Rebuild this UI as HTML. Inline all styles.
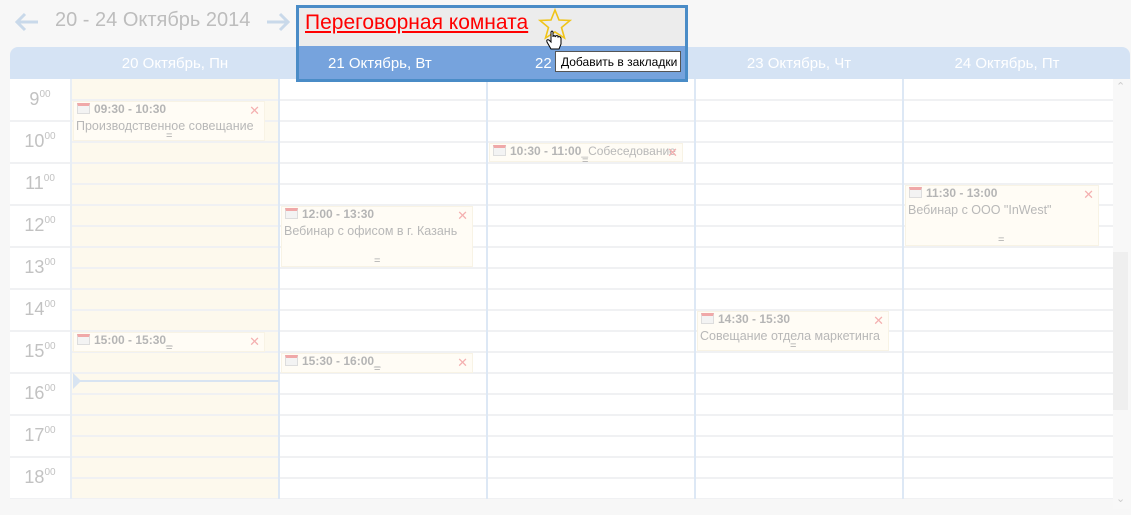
<!DOCTYPE html>
<html><head><meta charset="utf-8">
<style>
*{margin:0;padding:0;box-sizing:border-box}
body{width:1131px;height:515px;background:#f7f7f7;font-family:"Liberation Sans","Noto Sans CJK SC",sans-serif;position:relative;overflow:hidden}
.abs{position:absolute}
.title{left:55px;top:9px;font-size:20px;color:#bdbdbd}
.hdr{left:10px;top:47px;width:1120px;height:32px;background:#d5e3f4;border-radius:8px 8px 0 0}
.hdr span{position:absolute;top:8px;font-size:15px;color:#fff;width:208px;text-align:center}
.grid{left:10px;top:79px;width:1103px;height:420px;background:#fff;overflow:hidden}
.hl{position:absolute;left:60px;right:0;height:2px;background:#f0f1f3}
.hl.full{left:0}
.vl{position:absolute;top:0;bottom:0;width:2px;background:#dde8f5}
.hour{position:absolute;left:0;width:60px;text-align:center;font-size:18px;color:#c2c2c2}
.hour sup{font-size:10px;vertical-align:8px}
.ev{position:absolute;background:#fffcf5;border:1px solid #f8f3e5;font-size:12px;color:#b8b8b8}
.ev b{font-weight:bold;color:#b5b5b5}
.ev .ic{display:inline-block;width:13px;height:11px;border:1px solid #ddd;border-top:3px solid #f0a8a8;vertical-align:-1px;margin:0 4px 0 3px;background:#f3f3f3}
.ev .x{position:absolute;right:4px;top:1px;color:#f4b0b0;font-size:13px}
.ev .d{padding-left:2px;margin-top:3px;font-size:12.5px}
.eq{position:absolute;font-size:11px;color:#aaa}
</style></head><body>
<svg class="abs" style="left:14px;top:12px" width="26" height="20" viewBox="0 0 26 20"><path d="M24 10H3M11 2L3 10L11 18" fill="none" stroke="#c9d9ea" stroke-width="3"/></svg>
<div class="abs title">20 - 24 Октябрь 2014</div>
<svg class="abs" style="left:265px;top:12px" width="26" height="20" viewBox="0 0 26 20"><path d="M2 10H23M15 2L23 10L15 18" fill="none" stroke="#c9d9ea" stroke-width="3"/></svg>
<div class="abs hdr">
<span style="left:61px">20 Октябрь, Пн</span>
<span style="left:685px">23 Октябрь, Чт</span>
<span style="left:893px">24 Октябрь, Пт</span>
</div>
<div class="abs grid">
<div class="abs" style="left:61px;top:0;width:208px;height:420px;background:#fdf9ed"></div>
<div class="hl" style="top:20px"></div><div class="hl full" style="top:41px"></div>
<div class="hl" style="top:62px"></div><div class="hl full" style="top:83px"></div>
<div class="hl" style="top:104px"></div><div class="hl full" style="top:125px"></div>
<div class="hl" style="top:146px"></div><div class="hl full" style="top:167px"></div>
<div class="hl" style="top:188px"></div><div class="hl full" style="top:209px"></div>
<div class="hl" style="top:230px"></div><div class="hl full" style="top:251px"></div>
<div class="hl" style="top:272px"></div><div class="hl full" style="top:293px"></div>
<div class="hl" style="top:314px"></div><div class="hl full" style="top:335px"></div>
<div class="hl" style="top:356px"></div><div class="hl full" style="top:377px"></div>
<div class="hl" style="top:398px"></div><div class="hl full" style="top:419px"></div>
<div class="vl" style="left:60px;background:#e8eef5"></div>
<div class="vl" style="left:268px"></div><div class="vl" style="left:476px"></div>
<div class="vl" style="left:684px"></div><div class="vl" style="left:892px"></div>
<div class="hour" style="top:10px">9<sup>00</sup></div>
<div class="hour" style="top:52px">10<sup>00</sup></div>
<div class="hour" style="top:94px">11<sup>00</sup></div>
<div class="hour" style="top:136px">12<sup>00</sup></div>
<div class="hour" style="top:178px">13<sup>00</sup></div>
<div class="hour" style="top:220px">14<sup>00</sup></div>
<div class="hour" style="top:262px">15<sup>00</sup></div>
<div class="hour" style="top:304px">16<sup>00</sup></div>
<div class="hour" style="top:346px">17<sup>00</sup></div>
<div class="hour" style="top:388px">18<sup>00</sup></div>
<div class="abs" style="left:63px;top:301px;width:206px;height:2px;background:#d8e4f2"></div>
<div class="abs" style="left:63px;top:294px;width:0;height:0;border-top:8px solid transparent;border-bottom:8px solid transparent;border-left:8px solid #d8e4f2"></div>
</div>
<!-- events -->
<div class="ev" style="left:73px;top:101px;width:192px;height:40px"><span class="ic"></span><b>09:30 - 10:30</b><span class="x">✕</span><div class="d">Производственное совещание</div><span class="eq" style="left:92px;top:28px">=</span></div>
<div class="ev" style="left:489px;top:143px;width:194px;height:19px"><span class="ic"></span><b>10:30 - 11:00</b>_Собеседование<span class="x">✕</span><span class="eq" style="left:92px;top:11px">=</span></div>
<div class="ev" style="left:281px;top:206px;width:192px;height:61px"><span class="ic"></span><b>12:00 - 13:30</b><span class="x">✕</span><div class="d">Вебинар с офисом в г. Казань</div><span class="eq" style="left:92px;top:48px">=</span></div>
<div class="ev" style="left:905px;top:185px;width:194px;height:61px"><span class="ic"></span><b>11:30 - 13:00</b><span class="x">✕</span><div class="d">Вебинар с ООО "InWest"</div><span class="eq" style="left:92px;top:48px">=</span></div>
<div class="ev" style="left:73px;top:332px;width:192px;height:20px"><span class="ic"></span><b>15:00 - 15:30</b>_<span class="x">✕</span><span class="eq" style="left:92px;top:9px">=</span></div>
<div class="ev" style="left:281px;top:353px;width:192px;height:20px"><span class="ic"></span><b>15:30 - 16:00</b>_<span class="x">✕</span><span class="eq" style="left:92px;top:9px">=</span></div>
<div class="ev" style="left:697px;top:311px;width:192px;height:40px"><span class="ic"></span><b>14:30 - 15:30</b><span class="x">✕</span><div class="d">Совещание отдела маркетинга</div><span class="eq" style="left:92px;top:28px">=</span></div>
<!-- scrollbar -->
<div class="abs" style="left:1113px;top:79px;width:17px;height:430px;background:#f8f8f8"></div>
<div class="abs" style="left:1113px;top:252px;width:15px;height:158px;background:#efefef"></div>
<div class="abs" style="left:1116px;top:80px;font-size:11px;color:#ccc">&#8963;</div>
<div class="abs" style="left:1116px;top:492px;font-size:11px;color:#ccc">&#8964;</div>
<!-- popup -->
<div class="abs" style="left:296px;top:5px;width:392px;height:77px;border:3px solid #4a8cc7;background:#ececec">
<div class="abs" style="left:0;top:38px;width:386px;height:33px;background:#76a3dd"></div>
<div class="abs" style="left:6px;top:3px;font-size:21px;color:#f00;text-decoration:underline">Переговорная комната</div>
<div class="abs" style="left:29px;top:47px;font-size:15px;color:#fff">21 Октябрь, Вт</div>
<div class="abs" style="left:236px;top:47px;font-size:15px;color:#fff">22</div>
<svg class="abs" style="left:238px;top:0px" width="36" height="46" viewBox="0 0 36 46">
<path d="M18 2 L22 12 L33 12.5 L24.5 19.5 L27.5 30 L18 24 L8.5 30 L11.5 19.5 L3 12.5 L14 12 Z" fill="none" stroke="#f0c419" stroke-width="1.6"/>
<path d="M14 24 L14 34 L12 32 Q9 31 10 34 L14 41 L22 41 L24 36 L24 30 Q23 28 21 29 L21 28 Q19 27 18 29 L18 28 Q16 27 16 29 L16 24 Q15 22 14 24 Z" fill="#fff" stroke="#000" stroke-width="1"/>
</svg>
</div>
<div class="abs" style="left:555px;top:51px;width:126px;height:21px;background:#fff;border:1px solid #555;font-size:12px;color:#000;padding:3px 0 0 5px">Добавить в закладки</div>
</body></html>
